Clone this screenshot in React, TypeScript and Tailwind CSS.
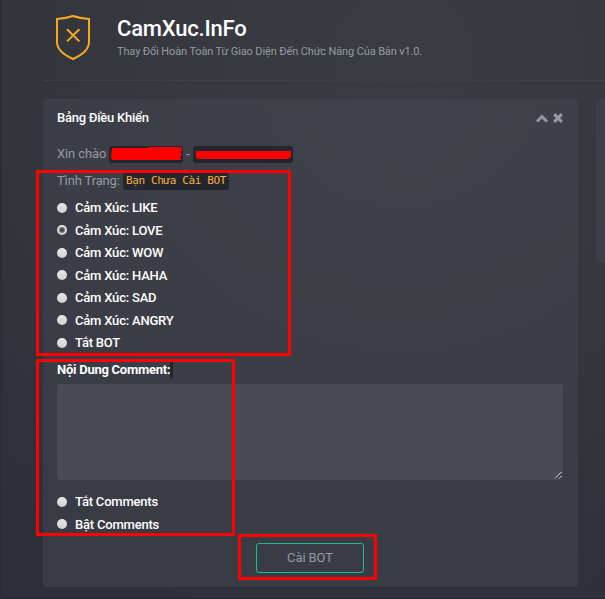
import { useState } from "react";

const reactions = [
  "Cảm Xúc: LIKE",
  "Cảm Xúc: LOVE",
  "Cảm Xúc: WOW",
  "Cảm Xúc: HAHA",
  "Cảm Xúc: SAD",
  "Cảm Xúc: ANGRY",
  "Tắt BOT",
];

function Radio({ label, checked, onSelect }: { label: string; checked: boolean; onSelect: () => void }) {
  return (
    <button type="button" role="radio" aria-checked={checked} onClick={onSelect} className="flex h-[22.5px] items-center text-left text-[13px] font-medium tracking-[-0.2px] text-white">
      <span className="mr-2 flex size-[10px] shrink-0 items-center justify-center rounded-full bg-gradient-to-b from-[#e6e6e6] to-[#d2d2d2]">
        {checked && <span className="size-1 rounded-full bg-[#4b4b4d] ring-1 ring-[#77787a]" />}
      </span>
      <span>{label}</span>
    </button>
  );
}

function ShieldIcon() {
  return (
    <svg className="mt-[14px] ml-[12px] h-[47px] w-[37px] shrink-0" viewBox="0 0 37 47" fill="none" stroke="#f6a821" strokeWidth="2">
      <path d="M2 5C8 4.5 13 3.7 18 2C23 3.7 28 4.500 34 5V28C34 36 27 41 18 45C9 41 2 36 2 28Z" />
      <path d="M12 15.200L24.400 27.400M24.400 15.200L12 27.400" />
    </svg>
  );
}

export default function App() {
  const [reaction, setReaction] = useState(1);
  const [comments, setComments] = useState(-1);
  return (
    <div className="relative h-[599px] w-[605px] overflow-hidden border-b border-l-2 border-b-[#24262d] border-l-[#2b2d35] bg-[radial-gradient(circle_at_400px_60px,#393c43_0px,#373940_200px,#32353c_400px,#2d3038_600px)] pl-[41px] font-['Roboto','Liberation_Sans',sans-serif] text-[13px] text-[#949ba2]">
      <header className="flex h-[81px] border-b border-[#3d404c]">
        <ShieldIcon />
        <div className="ml-[25px] pt-[15px]">
          <h1 className="text-[22px] leading-[28px] font-medium tracking-[-0.2px] text-white">CamXuc.InFo</h1>
          <p className="text-[11px] leading-[18px] tracking-[-0.13px] whitespace-nowrap">Thay Đổi Hoàn Toàn Từ Giao Diện Đến Chức Năng Của Bản v1.0.</p>
        </div>
      </header>

      <main className="mt-[18px] flex gap-[18px]">
        <section className="h-[488px] w-[535px] shrink-0 rounded-[3px] bg-[#44464f]/50 px-[14px]">
          <div className="flex h-[38px] items-center justify-between text-[13px] font-medium tracking-[-0.25px] text-white">
            <h2>Bảng Điều Khiển</h2>
            <div className="mr-[1px] flex items-center gap-[5px]">
              <svg className="h-[9px] w-[12px]" viewBox="0 0 12 9" fill="none" stroke="#949ba2" strokeWidth="3">
                <path d="M1 7.500L6 2.500L11 7.500" />
              </svg>
              <svg className="h-[10px] w-[10px]" viewBox="0 0 10 10" fill="none" stroke="#949ba2" strokeWidth="3.100">
                <path d="M1.200 1.200L8.800 8.800M8.800 1.200L1.200 8.800" />
              </svg>
            </div>
          </div>

          <div className="mt-[4px] flex h-[26px] items-center">
            <span className="w-[52px] tracking-[-0.1px] whitespace-nowrap">Xin chào</span>
            <span className="flex h-[17px] w-[74px] items-center rounded-[3px] bg-[#24262d] pl-[2px]">
              <svg className="h-[14px] w-[72px]" viewBox="0 0 72 14"><path d="M1 2Q0 1 2 1H36L38 0H69L71 1L70 6L71 8L69 10L70 13H1L0 10Z" fill="red" /></svg>
            </span>
            <span className="w-[10px] text-center">-</span>
            <span className="flex h-[17px] w-[100px] items-center rounded-[3px] bg-[#24262d] pt-[2px] pl-[3px]">
              <svg className="h-[10px] w-[96px]" viewBox="0 0 96 10"><path d="M0 1H93L95 0V7L92 9H2L0 7Z" fill="red" /></svg>
            </span>
          </div>
          <div className="mt-[1px] flex h-[26px] items-center">
            <span className="w-[66px] tracking-[-0.15px] whitespace-nowrap">Tình Trạng:</span>
            <code className="flex h-[17px] w-[106px] items-center justify-center rounded-[3px] bg-[#24262d] pt-[1px] font-['DejaVu_Sans_Mono',monospace] text-[11px] tracking-[-0.37px] whitespace-nowrap text-[#f7af3e]">Bạn Chưa Cài BOT</code>
          </div>

          <div role="radiogroup" className="mt-[2.500px] flex flex-col">
            {reactions.map((label, i) => (
              <Radio key={label} label={label} checked={reaction === i} onSelect={() => setReaction(i)} />
            ))}
          </div>

          <div className="mt-[6.500px] flex h-[18px] items-center text-[13px] font-bold tracking-[-0.25px] text-white">
            <span>Nội Dung Comment:</span>
            <span className="h-[17px] w-[3px] rounded-[1px] bg-[#24262d]" />
          </div>
          <div className="relative mt-[5px] h-[96px]">
            <textarea aria-label="Nội Dung Comment" className="block h-[96px] w-[506px] resize-none rounded-[3px] bg-[#494b54] p-2 text-white outline-none" />
            <svg className="absolute right-[2px] bottom-[1px] size-[7px]" viewBox="0 0 7 7" strokeWidth="1">
              <path d="M0 6.500L6.500 0M4 6.500L6.500 4" stroke="#e5e5e5" />
              <path d="M1.500 7L7 1.500M5.500 7L7 5.500" stroke="#24262d" />
            </svg>
          </div>
          <div role="radiogroup" className="mt-[11px] flex flex-col">
            <Radio label="Tắt Comments" checked={comments === 0} onSelect={() => setComments(0)} />
            <Radio label="Bật Comments" checked={comments === 1} onSelect={() => setComments(1)} />
          </div>
          <div className="mt-[7px] mr-[1px] flex justify-center">
            <button type="button" className="h-[30px] w-[108px] rounded-[3px] border border-[#1bbf89] text-[13px] tracking-[-0.1px]">Cài BOT</button>
          </div>
        </section>
        <aside className="h-[164px] w-[40px] shrink-0 rounded-[3px] bg-[#44464f]/50" />
      </main>

      {/* Hand-marked callouts over the form */}
      <div className="pointer-events-none absolute top-[170px] left-[34px] h-[186px] w-[255px] rounded-[1px] border-3 border-[#ff0000]" />
      <div className="pointer-events-none absolute top-[359px] left-[34px] h-[177px] w-[199px] rounded-[1px] border-3 border-[#ff0000]" />
      <div className="pointer-events-none absolute top-[534px] left-[236px] h-[46px] w-[139px] rounded-[1px] border-3 border-[#ff0000]" />
    </div>
  );
}
